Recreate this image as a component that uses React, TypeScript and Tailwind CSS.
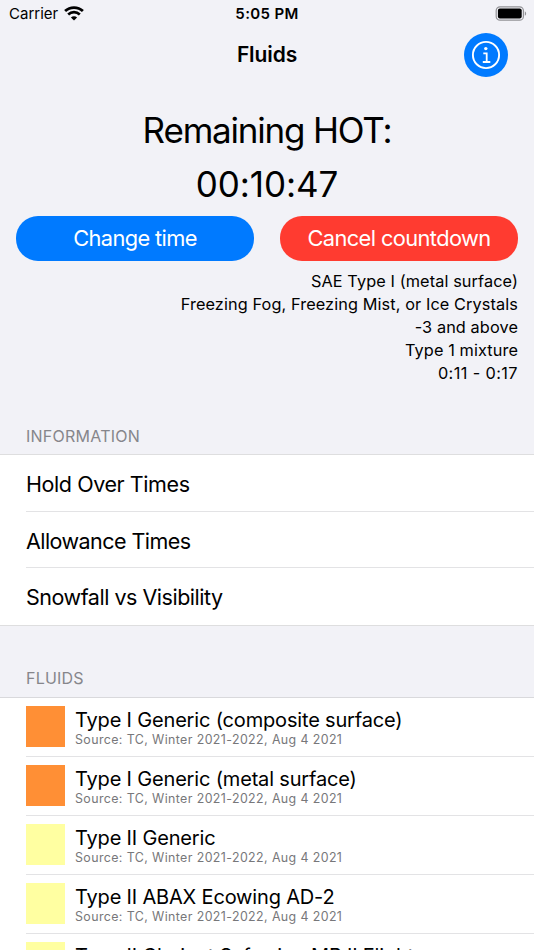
const info = [
  { name: "Hold Over Times", tracking: "tracking-[-0.42px]" },
  { name: "Allowance Times", tracking: "tracking-[-0.55px]" },
  { name: "Snowfall vs Visibility", tracking: "tracking-[-0.48px]" },
];

const fluids = [
  { name: "Type I Generic (composite surface)", color: "bg-[#ff8f35]" },
  { name: "Type I Generic (metal surface)", color: "bg-[#ff8f35]" },
  { name: "Type II Generic", color: "bg-[#ffffa1]" },
  { name: "Type II ABAX Ecowing AD-2", color: "bg-[#ffffa1]" },
  { name: "Type II Clariant Safewing MP II Flight", color: "bg-[#ffffa1]" },
];

const details = [
  { text: "SAE Type I (metal surface)", tracking: "tracking-[0.1px]" },
  { text: "Freezing Fog, Freezing Mist, or Ice Crystals", tracking: "tracking-[0.1px]" },
  { text: "-3 and above", tracking: "tracking-[0.1px]" },
  { text: "Type 1 mixture", tracking: "tracking-[0.1px]" },
  { text: "0:11 - 0:17", tracking: "tracking-[0.4px]" },
];

function WifiIcon() {
  return (
    <svg width="20" height="15" viewBox="0 0 20 15" fill="none" stroke="#000" className="mb-[2px]">
      <path d="M1.1 5.1 C6.1 .4 13.9 .4 18.9 5.1" strokeWidth="2.8" />
      <path d="M4.2 8.4 C7.5 5.4 12.5 5.4 15.8 8.4" strokeWidth="2.7" />
      <path d="M10 14.4 L6.9 11.4 C8.7 9.8 11.3 9.8 13.1 11.4 Z" fill="#000" stroke="none" />
    </svg>
  );
}

function BatteryIcon() {
  return (
    <svg width="32" height="15" viewBox="0 0 32 15" fill="none" className="mb-[2px]">
      <rect x="1.2" y="0.8" width="27.2" height="13.4" rx="3.8" stroke="#929296" strokeWidth="1.2" />
      <rect x="2.9" y="2.5" width="23.8" height="10" rx="2" fill="#000" />
      <path d="M29.8 5.2 C31.6 6 31.6 9 29.8 9.8 Z" fill="#929296" />
    </svg>
  );
}

function InfoIcon() {
  return (
    <svg width="30" height="30" viewBox="0 0 30 30" fill="none" stroke="#fff">
      <circle cx="15" cy="15" r="13.1" strokeWidth="1.9" />
      <circle cx="14.8" cy="8.6" r="1.7" fill="#fff" stroke="none" />
      <path d="M12.3 13.3 H15.7 V22 M11.8 22 H19.3" strokeWidth="1.8" />
    </svg>
  );
}

export default function App() {
  return (
    <div className="flex h-[950px] w-[534px] flex-col overflow-hidden bg-[#f2f2f7] font-['Inter','Liberation_Sans',sans-serif] text-black">
      <header className="grid h-[27px] shrink-0 grid-cols-3 items-center pl-[9px] pr-[7px]">
        <div className="flex items-center gap-[6px] text-[15px] leading-[28px]">
          <span>Carrier</span>
          <WifiIcon />
        </div>
        <span className="text-center text-[15px] leading-[28px] font-semibold tracking-[0.35px]">
          <span className="-ml-[2px]">5:05 PM</span>
        </span>
        <div className="flex justify-end"><BatteryIcon /></div>
      </header>

      <nav className="grid h-[56px] shrink-0 grid-cols-[1fr_auto_1fr] items-center px-[26px]">
        <span />
        <h1 className="text-[21px] font-semibold tracking-[-0.1px]">Fluids</h1>
        <button className="flex h-[44.5px] w-[44.5px] items-center justify-center justify-self-end rounded-full bg-[#007aff]">
          <InfoIcon />
        </button>
      </nav>

      <section className="h-[336px] shrink-0 pt-[21px]">
        <div className="text-center text-[35px]">
          <p className="leading-[53px] tracking-[-1.2px]">Remaining HOT:</p>
          <p className="pt-px leading-[53px] tracking-[-0.1px]">00:10:47</p>
        </div>
        <div className="mt-[5px] grid grid-cols-2 gap-[26px] px-4 text-[21.8px] tracking-[-0.6px] text-white">
          <button className="h-[44.5px] rounded-[22px] bg-[#007aff]">Change time</button>
          <button className="h-[44.5px] rounded-[22px] bg-[#ff3b30]">Cancel countdown</button>
        </div>
        <div className="mt-[9px] pr-4 text-right text-[16.3px] leading-[23.2px]">
          {details.map((line) => <p key={line.text} className={line.tracking}>{line.text}</p>)}
        </div>
      </section>

      <section className="shrink-0">
        <h2 className="h-[35px] pt-[5px] pl-[26px] text-[16px] leading-[24px] tracking-[0.25px] text-[#86868b]">INFORMATION</h2>
        <ul className="border-y border-[#dededf] bg-white pl-[26px]">
          {info.map((row) => (
            <li key={row.name} className={`h-[56.7px] border-b border-[#e3e3e5] text-[21.5px] leading-[58px] last:border-b-0 ${row.tracking}`}>
              {row.name}
            </li>
          ))}
        </ul>
      </section>

      <section className="shrink-0">
        <h2 className="h-[71px] pt-[40px] pl-[26px] text-[16px] leading-[24px] tracking-[0.2px] text-[#86868b]">FLUIDS</h2>
        <ul className="border-t border-[#d9d9dc] bg-white pl-[26px]">
          {fluids.map((fluid) => (
            <li key={fluid.name} className="flex h-[58.9px] border-b border-[#e3e3e5] pt-[8px]">
              <span className={`h-[41px] w-[39px] shrink-0 ${fluid.color}`} />
              <div className="pl-[10px] whitespace-nowrap">
                <p className="pt-px text-[20px] leading-[26px] tracking-[-0.17px]">{fluid.name}</p>
                <p className="text-[12.4px] leading-[14px] tracking-[0.4px] text-[#77777a]">Source: TC, Winter 2021-2022, Aug 4 2021</p>
              </div>
            </li>
          ))}
        </ul>
      </section>
    </div>
  );
}
